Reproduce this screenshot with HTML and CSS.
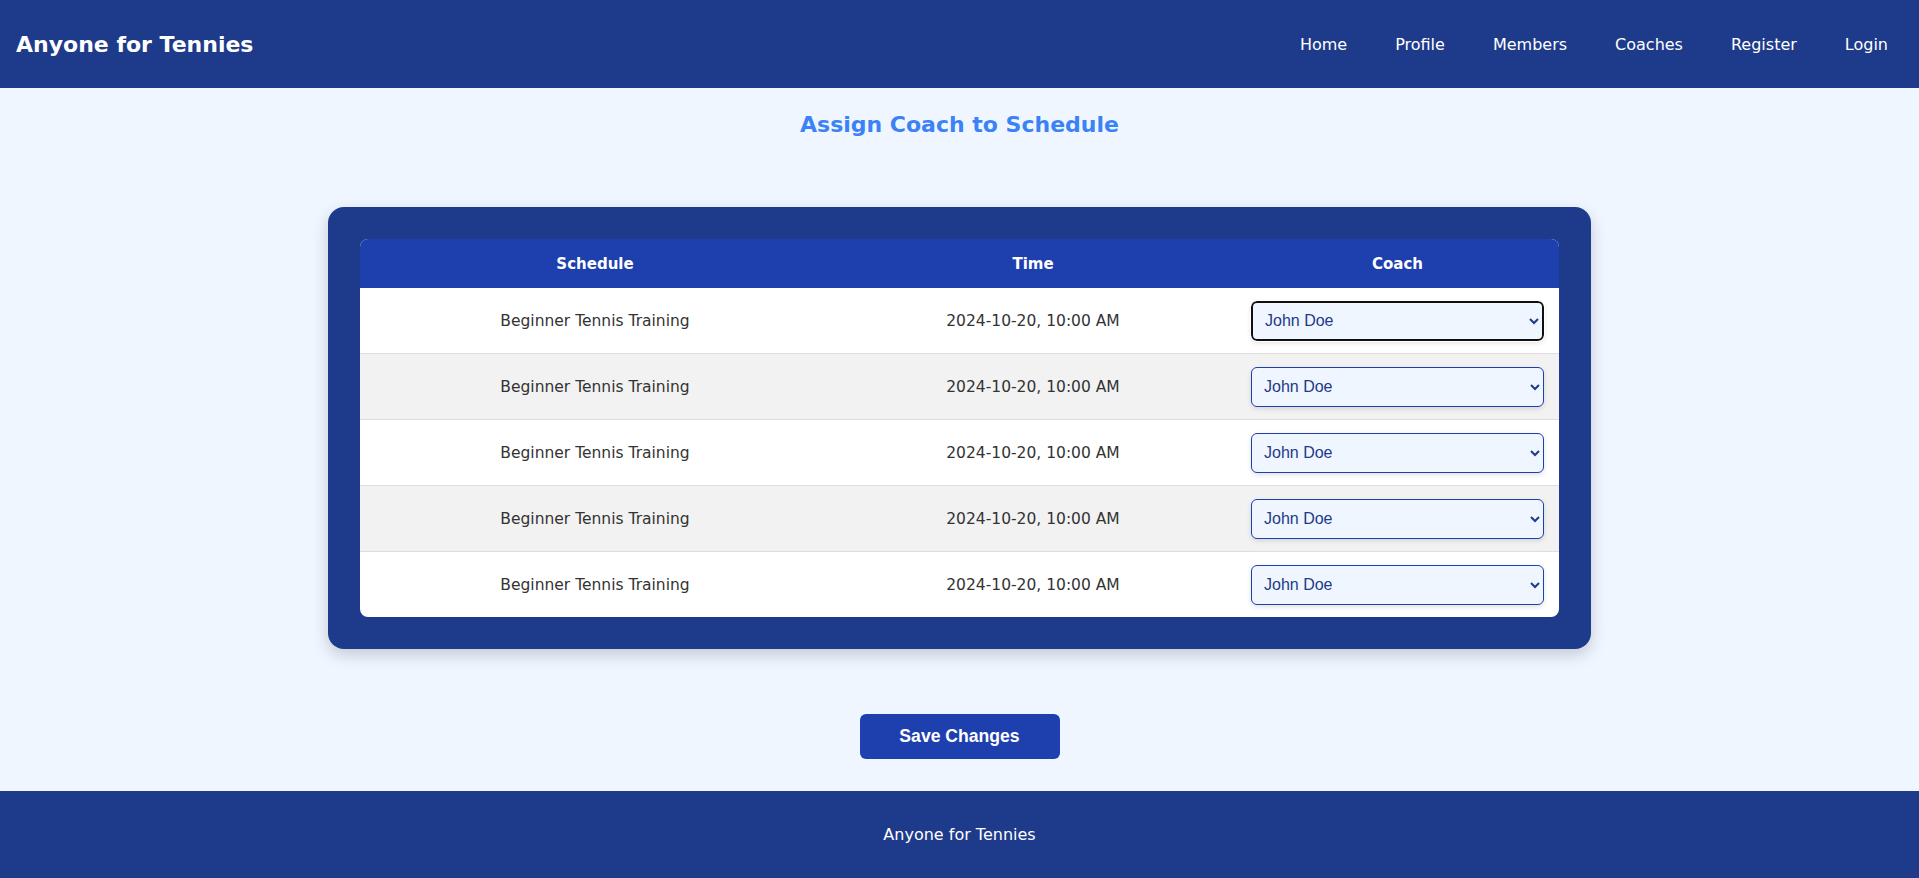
FILE: index.html
```html
<!DOCTYPE html>
<html lang="en">
<head>
<meta charset="utf-8">
<title>Assign Coach to Schedule</title>
<link rel="stylesheet" href="styles.css">
</head>
<body>
<header class="site-header">
  <div class="logo">Anyone for Tennies</div>
  <nav class="nav">
    <a href="#">Home</a>
    <a href="#">Profile</a>
    <a href="#">Members</a>
    <a href="#">Coaches</a>
    <a href="#">Register</a>
    <a href="#">Login</a>
  </nav>
</header>
<main class="main">
  <h2 class="page-title">Assign Coach to Schedule</h2>
  <div class="card">
    <table class="schedule-table">
      <colgroup>
        <col class="col-schedule">
        <col class="col-time">
        <col class="col-coach">
      </colgroup>
      <thead>
        <tr><th>Schedule</th><th>Time</th><th>Coach</th></tr>
      </thead>
      <tbody>
        <tr><td>Beginner Tennis Training</td><td>2024-10-20, 10:00 AM</td><td><select class="coach-select is-focused"><option>John Doe</option><option>Jane Smith</option></select></td></tr>
        <tr><td>Beginner Tennis Training</td><td>2024-10-20, 10:00 AM</td><td><select class="coach-select"><option>John Doe</option><option>Jane Smith</option></select></td></tr>
        <tr><td>Beginner Tennis Training</td><td>2024-10-20, 10:00 AM</td><td><select class="coach-select"><option>John Doe</option><option>Jane Smith</option></select></td></tr>
        <tr><td>Beginner Tennis Training</td><td>2024-10-20, 10:00 AM</td><td><select class="coach-select"><option>John Doe</option><option>Jane Smith</option></select></td></tr>
        <tr><td>Beginner Tennis Training</td><td>2024-10-20, 10:00 AM</td><td><select class="coach-select"><option>John Doe</option><option>Jane Smith</option></select></td></tr>
      </tbody>
    </table>
  </div>
  <div class="actions">
    <button class="save-btn" type="button">Save Changes</button>
  </div>
</main>
<footer class="site-footer">Anyone for Tennies</footer>
</body>
</html>
```
FILE: styles.css
```css
* { box-sizing: border-box; }
html, body { margin: 0; padding: 0; }
body {
  font-family: "DejaVu Sans", "Open Sans", sans-serif;
  background: #eff6ff;
  color: #333;
}
.site-header {
  height: 88px;
  background: #1e3a8a;
  display: flex;
  align-items: center;
  justify-content: space-between;
  padding: 0 31px 0 16px;
}
.logo {
  color: #fff;
  font-weight: bold;
  font-size: 22px;
}
.nav {
  display: flex;
  gap: 48px;
}
.nav a {
  color: #fff;
  text-decoration: none;
  font-size: 16px;
}
.main {
  display: flex;
  flex-direction: column;
  align-items: center;
}
.page-title {
  margin: 19px 0 0;
  height: 36px;
  line-height: 36px;
  font-size: 22px;
  color: #3b82f6;
  font-weight: bold;
}
.card {
  margin-top: 64px;
  width: 1263px;
  background: #1e3a8a;
  border-radius: 16px;
  padding: 32px;
  box-shadow: 0 6px 16px rgba(0, 0, 0, 0.18);
}
.schedule-table {
  width: 100%;
  border-collapse: separate;
  border-spacing: 0;
  background: #fff;
  border-radius: 8px;
  overflow: hidden;
  table-layout: fixed;
}
.col-schedule { width: 470px; }
.col-time { width: 406px; }
.col-coach { width: 323px; }
.schedule-table th {
  background: #1e40af;
  color: #fff;
  font-weight: bold;
  font-size: 15px;
  height: 49px;
  padding: 0 15px;
  text-align: center;
}
.schedule-table td {
  height: 66px;
  padding: 0 15px;
  text-align: center;
  font-size: 15.5px;
  color: #333;
  border-bottom: 1px solid #ddd;
}
.schedule-table tbody tr:nth-child(even) td { background: #f2f2f2; }
.schedule-table tbody tr:last-child td { border-bottom: none; height: 65px; }
.coach-select {
  width: 100%;
  height: 40px;
  font-family: "Liberation Sans", Arial, sans-serif;
  font-size: 16px;
  color: #1e3a8a;
  background-color: #eff6ff;
  border: 1px solid #1e40af;
  border-radius: 6px;
  padding: 0 8px;
  box-shadow: 0 2px 5px rgba(0, 0, 0, 0.12);
}
.coach-select.is-focused {
  border: 2px solid #101010;
  outline: 1px solid #fff;
}
.actions {
  margin-top: 65px;
  margin-bottom: 32px;
}
.save-btn {
  width: 200px;
  height: 45px;
  background: #1e40af;
  color: #fff;
  border: none;
  border-radius: 6px;
  font-family: "Liberation Sans", Arial, sans-serif;
  font-weight: bold;
  font-size: 17.6px;
}
.site-footer {
  height: 87px;
  background: #1e3a8a;
  color: #fff;
  display: flex;
  align-items: center;
  justify-content: center;
  font-size: 16px;
}
```
